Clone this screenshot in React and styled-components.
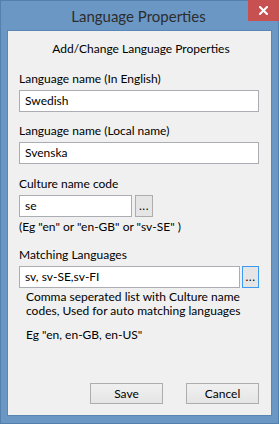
import React from 'react';
import styled, { createGlobalStyle } from 'styled-components';

const Global = createGlobalStyle`
  html, body {
    margin: 0;
    padding: 0;
    background: #6b97c5;
  }
  * {
    box-sizing: border-box;
  }
`;

const Window = styled.div`
  width: 279px;
  height: 424px;
  background: #6b97c5;
  border: 1px solid #5580ad;
  display: flex;
  flex-direction: column;
  padding: 0 6px 7px 6px;
  font-family: Lato, "Noto Sans", sans-serif;
`;

const TitleBar = styled.div`
  position: relative;
  height: 29px;
  flex: none;
  display: flex;
  align-items: center;
  justify-content: center;
`;

const Title = styled.div`
  font-size: 15px;
  color: #2d2d2d;
  padding-top: 1px;
  margin-left: -2px;
`;

const CloseButton = styled.div`
  position: absolute;
  top: -1px;
  right: -7px;
  width: 31px;
  height: 21px;
  background: #c75050;
  display: flex;
  align-items: center;
  justify-content: center;
`;

const Client = styled.div`
  flex: 1;
  background: #f0f0f0;
  border: 1px solid #5a86b3;
  display: flex;
  flex-direction: column;
  padding: 10px 12px 11px 11px;
  font-size: 12px;
  color: #000;
`;

const Heading = styled.div`
  text-align: center;
  line-height: 16px;
  margin-left: 4px;
`;

const Label = styled.div`
  line-height: 16px;
  margin-top: ${p => p.$gap}px;
`;

const Row = styled.div`
  display: flex;
  gap: ${p => p.$gap || 0}px;
  margin-top: 3px;
`;

const TextBox = styled.div`
  width: ${p => p.$width}px;
  height: 22px;
  background: #fff;
  border: 1px solid #abadb3;
  padding: 0 5px;
  display: flex;
  align-items: center;
  line-height: 16px;
`;

const DotsButton = styled.div`
  width: ${p => p.$width}px;
  height: 22px;
  background: #e5e5e5;
  border: 1px solid ${p => (p.$focused ? '#3c9bf0' : '#adadad')};
  display: flex;
  align-items: flex-end;
  justify-content: center;
  padding-bottom: 4px;
  font-size: 12px;
  line-height: 12px;
  letter-spacing: 0.5px;
`;

const Hint = styled.div`
  line-height: 14px;
  margin-top: ${p => p.$gap}px;
  padding-left: ${p => p.$indent || 0}px;
`;

const Buttons = styled.div`
  margin-top: auto;
  display: flex;
  justify-content: flex-end;
  gap: 23px;
`;

const Button = styled.div`
  width: 73px;
  height: 21px;
  border: 1px solid #adadad;
  background: linear-gradient(#f0f0f0, #e5e5e5);
  display: flex;
  align-items: center;
  justify-content: center;
  font-size: 12px;
`;

const CloseIcon = () => (
  <svg width="9" height="9" viewBox="0 0 9 9">
    <path d="M1 1 L8 8 M8 1 L1 8" stroke="#fff" strokeWidth="2" strokeLinecap="square" />
  </svg>
);

export default function App() {
  return (
    <>
      <Global />
      <Window>
        <TitleBar>
          <Title>Language Properties</Title>
          <CloseButton>
            <CloseIcon />
          </CloseButton>
        </TitleBar>
        <Client>
          <Heading>Add/Change Language Properties</Heading>

          <Label $gap={14}>Language name (In English)</Label>
          <Row>
            <TextBox $width={240}>Swedish</TextBox>
          </Row>

          <Label $gap={11}>Language name (Local name)</Label>
          <Row>
            <TextBox $width={241}>Svenska</TextBox>
          </Row>

          <Label $gap={12}>Culture name code</Label>
          <Row $gap={3}>
            <TextBox $width={113}>se</TextBox>
            <DotsButton $width={18}>...</DotsButton>
          </Row>
          <Hint $gap={3}>(Eg "en" or "en-GB" or "sv-SE" )</Hint>

          <Label $gap={13}>Matching Languages</Label>
          <Row $gap={2}>
            <TextBox $width={222}>sv, sv-SE,sv-FI</TextBox>
            <DotsButton $width={17} $focused>...</DotsButton>
          </Row>
          <Hint $gap={2} $indent={7}>Comma seperated list with Culture name</Hint>
          <Hint $gap={0} $indent={7}>codes, Used for auto matching languages</Hint>
          <Hint $gap={10} $indent={7}>Eg "en, en-GB, en-US"</Hint>

          <Buttons>
            <Button>Save</Button>
            <Button>Cancel</Button>
          </Buttons>
        </Client>
      </Window>
    </>
  );
}
